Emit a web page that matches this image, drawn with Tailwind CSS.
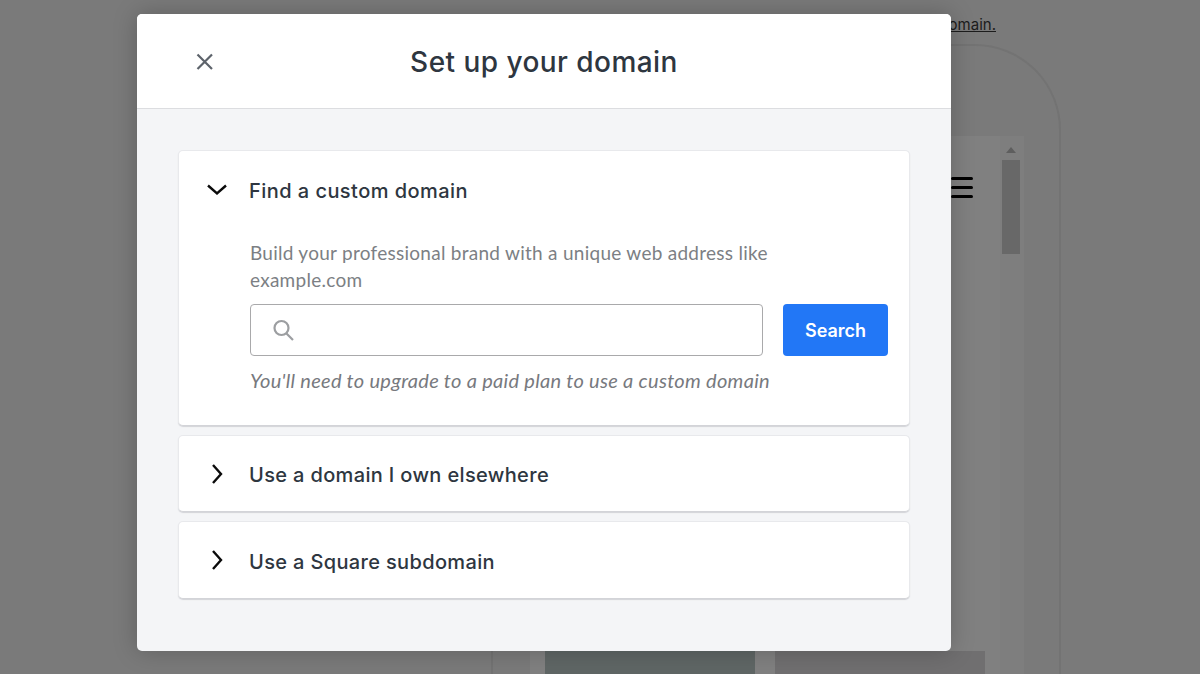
<!DOCTYPE html>
<html>
<head>
<meta charset="utf-8">
<script src="https://cdn.jsdelivr.net/npm/@tailwindcss/browser@4"></script>
</head>
<body class="m-0">
<div class="relative w-[1200px] h-[674px] overflow-hidden bg-[#7a7a7a] font-['Inter','Liberation_Sans',sans-serif]">
  <!-- dimmed page behind the dialog -->
  <div class="absolute left-[491px] top-[44px] w-[570px] h-[700px] rounded-t-[86px] border-2 border-[#737373]"></div>
  <div class="absolute left-[530px] top-[136px] w-[494px] h-[560px] bg-[#808080]">
    <div class="absolute right-0 top-0 w-6 h-full bg-[#7e7e7e]"></div>
    <div class="absolute right-[8px] top-[11px] w-0 h-0 border-x-[5px] border-x-transparent border-b-[6px] border-b-[#5e5e5e]"></div>
    <div class="absolute right-[4px] top-[24px] w-[18px] h-[94px] bg-[#686868]"></div>
    <div class="absolute left-[421px] top-[41px] flex flex-col gap-[6px]">
      <div class="w-[22px] h-[3px] rounded-full bg-black"></div>
      <div class="w-[22px] h-[3px] rounded-full bg-black"></div>
      <div class="w-[22px] h-[3px] rounded-full bg-black"></div>
    </div>
    <div class="absolute left-[15px] top-[515px] w-[210px] h-[50px] bg-[#5f6665]"></div>
    <div class="absolute left-[245px] top-[515px] w-[210px] h-[50px] bg-[#706f70]"></div>
  </div>
  <div class="absolute left-[900px] top-[15px] w-[96px] text-right text-[15px] leading-[20px] underline text-[#1c1c1c]">domain.</div>

  <!-- dialog -->
  <div class="absolute left-[137px] top-[14px] w-[814px] h-[637px] rounded-[5px] bg-[#f4f5f7] shadow-[0_0_24px_rgba(0,0,0,0.22)] overflow-hidden flex flex-col">
    <div class="relative h-[95px] shrink-0 bg-white border-b border-[#dcdde0] flex items-center justify-center">
      <svg class="absolute left-[57px] top-[37px]" width="22" height="22" viewBox="0 0 22 22" fill="none" stroke="#5d636b" stroke-width="2.2"><path d="M3.5 3.5 18 18M18 3.5 3.5 18"/></svg>
      <h1 class="text-[28px] leading-[36px] font-medium text-[#2e3640] tracking-[0.45px] mt-[1px]">Set up your domain</h1>
    </div>
    <div class="px-[41px] pt-[41px] flex flex-col gap-[9px]">
      <section class="h-[276px] shrink-0 bg-white rounded-[5px] border border-[#e8e9ec] border-b-[#d3d4d8] shadow-[0_1px_1px_#d3d4d8]">
        <div class="h-[80px] flex items-center pl-[26px]">
          <svg width="24" height="24" viewBox="0 0 24 24" fill="none" stroke="#0b0b0b" stroke-width="2.4" class="mt-[-2px]"><path d="M3 7.5 12 15.5 21 7.5"/></svg>
          <span class="ml-[20px] text-[20px] font-medium text-[#2e3640] tracking-[0.45px]">Find a custom domain</span>
        </div>
        <div class="pl-[71px] pr-[21px] mt-[8px]">
          <p class="w-[540px] text-[19px] leading-[27px] tracking-[0.27px] text-[#7c7f84] font-['Lato','Liberation_Sans',sans-serif]">Build your professional brand with a unique web address like example.com</p>
          <div class="flex gap-[20px] mt-[11px]">
            <div class="w-[513px] h-[52px] rounded-[4px] border-[1.5px] border-[#a9a9ab] flex items-center pl-[20px]">
              <svg width="24" height="24" viewBox="0 0 24 24" fill="none" stroke="#9c9ea1" stroke-width="2.2"><circle cx="10.5" cy="10" r="7"/><path d="M15.5 15.5 22 22"/></svg>
            </div>
            <button class="w-[105px] h-[52px] rounded-[4px] bg-[#2277f6] text-white text-[18px] font-semibold">Search</button>
          </div>
          <p class="mt-[11px] text-[20px] leading-[27px] tracking-[0.3px] italic text-[#77797e] font-['Lato','Liberation_Sans',sans-serif]">You'll need to upgrade to a paid plan to use a custom domain</p>
        </div>
      </section>
      <section class="h-[77px] shrink-0 bg-white rounded-[5px] border border-[#e8e9ec] border-b-[#d3d4d8] shadow-[0_1px_1px_#d3d4d8] flex items-center pl-[26px]">
        <svg width="24" height="24" viewBox="0 0 24 24" fill="none" stroke="#0b0b0b" stroke-width="2.4"><path d="M8 3 16 12 8 21"/></svg>
        <span class="ml-[20px] mt-[2px] text-[20px] font-medium text-[#2e3640] tracking-[0.35px]">Use a domain I own elsewhere</span>
      </section>
      <section class="h-[78px] shrink-0 bg-white rounded-[5px] border border-[#e8e9ec] border-b-[#d3d4d8] shadow-[0_1px_1px_#d3d4d8] flex items-center pl-[26px]">
        <svg width="24" height="24" viewBox="0 0 24 24" fill="none" stroke="#0b0b0b" stroke-width="2.4"><path d="M8 3 16 12 8 21"/></svg>
        <span class="ml-[20px] mt-[3px] text-[20px] font-medium text-[#2e3640] tracking-[0.35px]">Use a Square subdomain</span>
      </section>
    </div>
  </div>
</div>
</body>
</html>
